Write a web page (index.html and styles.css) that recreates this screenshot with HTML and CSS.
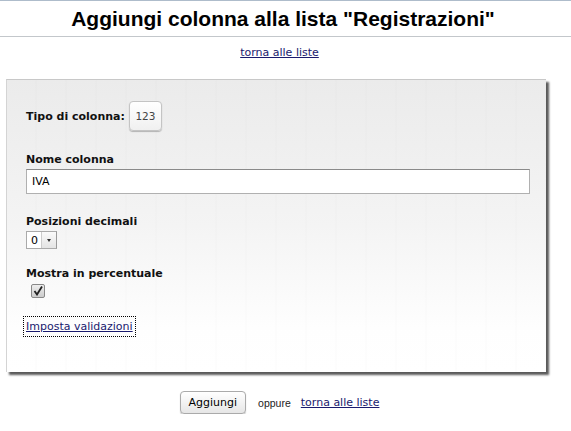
FILE: index.html
```html
<!DOCTYPE html>
<html lang="it">
<head>
<meta charset="utf-8">
<title>Aggiungi colonna</title>
<link rel="stylesheet" href="styles.css">
</head>
<body>
<div class="header">
  <h1 class="title">Aggiungi colonna alla lista "Registrazioni"</h1>
</div>
<div class="nav"><a href="#" class="link">torna alle liste</a></div>
<div class="panel">
  <div class="row-type">
    <span class="label">Tipo di colonna:</span>
    <span class="type-btn">123</span>
  </div>
  <div class="field first">
    <div class="label">Nome colonna</div>
    <input class="text-input" type="text" value="IVA">
  </div>
  <div class="field second">
    <div class="label">Posizioni decimali</div>
    <span class="select"><span class="select-val">0</span><span class="select-arrow"></span></span>
  </div>
  <div class="field third">
    <div class="label">Mostra in percentuale</div>
    <span class="checkbox"><svg width="10" height="10" viewBox="0 0 10 10"><path d="M1.5 5 L4 8.5 L9 0.5" fill="none" stroke="#222" stroke-width="1.8"/></svg></span>
  </div>
  <div class="valid"><a href="#" class="link focus">Imposta validazioni</a></div>
</div>
<div class="actions">
  <span class="btn">Aggiungi</span>
  <span class="oppure">oppure</span>
  <a href="#" class="link">torna alle liste</a>
</div>
</body>
</html>
```
FILE: styles.css
```css
html, body {
  margin: 0;
  padding: 0;
  background: #fff;
}
body {
  font-family: "DejaVu Sans", Verdana, sans-serif;
  font-size: 11px;
  color: #000;
  border-top: 1px solid #aebccb;
}
.header {
  height: 35px;
  border-bottom: 1px solid #c3c7cb;
  display: flex;
  align-items: center;
  justify-content: center;
  padding-right: 5px;
}
.title {
  margin: 0;
  font-family: "Liberation Sans", Arial, sans-serif;
  font-size: 21px;
  font-weight: bold;
  color: #000;
}
.nav {
  text-align: center;
  padding-top: 9px;
  padding-right: 12px;
  height: 33px;
}
.link {
  color: #1a1a6e;
  text-decoration: underline;
  font-size: 11px;
}
.panel {
  margin-left: 6px;
  width: 540px;
  height: 293px;
  box-sizing: border-box;
  border-top: 1px solid #c8c8c8;
  border-left: 1px solid #d4d4d4;
  box-shadow: 3px 3px 2px #5a5a5a;
  background:
    repeating-linear-gradient(90deg, rgba(0,0,0,0) 0 28px, rgba(0,0,0,0.009) 28px 30px),
    linear-gradient(180deg, #ebebeb 0%, #f4f4f4 50%, #fefefe 85%, #fff 100%);
  padding: 21px 0 0 19px;
}
.label {
  font-weight: bold;
  font-size: 11px;
  color: #111;
  line-height: 13px;
}
.row-type {
  display: flex;
  align-items: center;
  gap: 4px;
}
.type-btn {
  width: 33px;
  height: 30px;
  box-sizing: border-box;
  border: 1px solid #c4c4c4;
  border-radius: 4px;
  background: linear-gradient(180deg, #fff 0%, #f0f0f0 100%);
  box-shadow: 0 1px 1px rgba(0,0,0,0.25);
  display: flex;
  align-items: center;
  justify-content: center;
  font-size: 10.5px;
  color: #444;
}
.field {
  margin-top: 20px;
}
.field.first {
  margin-top: 22px;
}
.field.second {
  margin-top: 21px;
}
.field.third {
  margin-top: 18px;
}
.field .label {
  margin-bottom: 3px;
}
.text-input {
  display: block;
  width: 504px;
  height: 25px;
  box-sizing: border-box;
  margin: 0;
  border: 1px solid #b0b0b0;
  border-top-color: #8a8a8a;
  background: #fff;
  padding: 0 0 0 5px;
  font-family: "DejaVu Sans", Verdana, sans-serif;
  font-size: 11px;
  color: #000;
  outline: none;
}
.select {
  display: inline-flex;
  align-items: center;
  height: 16px;
  border: 1px solid #aaa;
  border-right-color: #999;
  background: #fff;
  font-size: 11px;
}
.select-val {
  padding: 0 3px 0 4px;
}
.select-arrow {
  width: 14px;
  height: 16px;
  background: linear-gradient(180deg, #fafafa, #e4e4e4);
  border-left: 1px solid #ccc;
  position: relative;
}
.select-arrow::after {
  content: "";
  position: absolute;
  left: 5px;
  top: 7px;
  border-left: 2px solid transparent;
  border-right: 2px solid transparent;
  border-top: 3px solid #333;
}
.checkbox {
  display: flex;
  align-items: center;
  justify-content: center;
  width: 12px;
  height: 12px;
  margin: 4px 0 0 5px;
  border: 1px solid #888;
  border-radius: 2px;
  background: linear-gradient(180deg, #eee, #ccc);
}
.valid {
  margin-top: 19px;
}
.valid .link {
  display: inline-block;
  font-size: 11px;
  line-height: 13px;
  padding: 3px 2px;
  margin-left: -2px;
  outline: 1px dotted #000;
}
.actions {
  display: flex;
  align-items: center;
  justify-content: center;
  margin-top: 19px;
  padding-right: 12px;
}
.btn {
  font-family: "DejaVu Sans", Verdana, sans-serif;
  font-size: 11px;
  color: #000;
  padding: 4px 8px;
  border: 1px solid #aaa;
  border-radius: 4px;
  background: linear-gradient(180deg, #fff, #e6e6e6);
  box-shadow: 0 1px 1px rgba(0,0,0,0.25);
  margin-right: 12px;
}
.oppure {
  font-size: 10.5px;
  color: #222;
  font-family: "Liberation Sans", Arial, sans-serif;
  margin-right: 10px;
}
.actions .link {
  font-size: 11px;
}
```
